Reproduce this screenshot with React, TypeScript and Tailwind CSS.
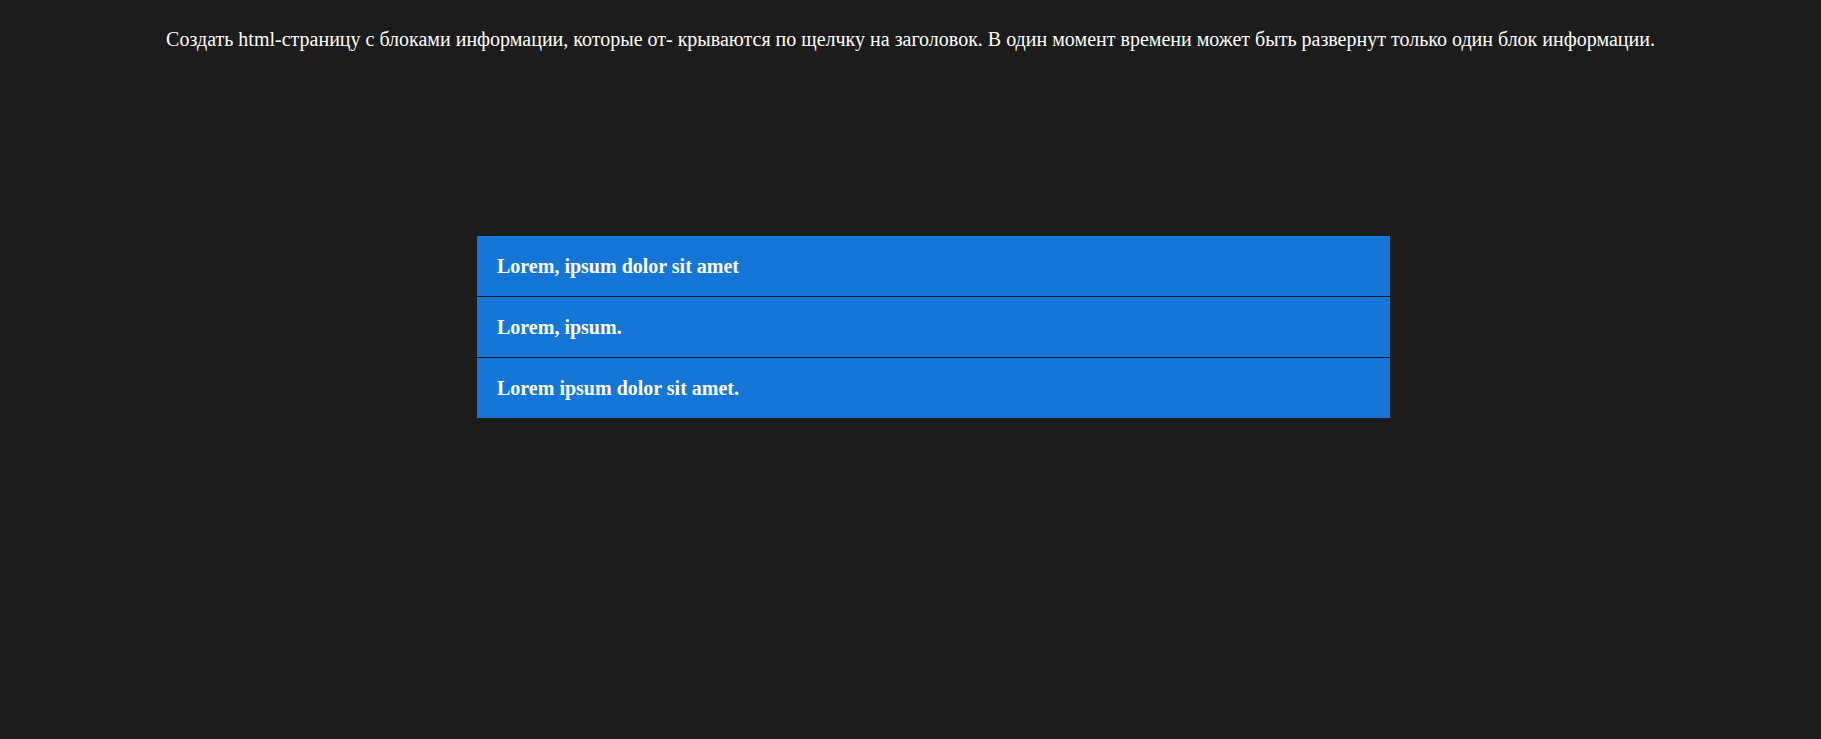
const items = [
  "Lorem, ipsum dolor sit amet",
  "Lorem, ipsum.",
  "Lorem ipsum dolor sit amet.",
];

export default function App() {
  return (
    <div
      className="min-h-[739px] bg-[#1c1c1c] text-white"
      style={{ fontFamily: '"Liberation Serif", "Times New Roman", serif' }}
    >
      <p className="h-[51px] pt-[28px] text-center text-[20px] leading-[23px]">
        Создать html-страницу с блоками информации, которые от- крываются по щелчку на заголовок. В один момент времени может быть развернут только один блок информации.
      </p>

      {/* Accordion */}
      <div className="mt-[185px] ml-[477px] flex w-[913px] flex-col gap-px bg-[#161616]">
        {items.map((title) => (
          <button
            key={title}
            className="flex h-[60px] items-center bg-[#1476d6] px-5 text-left text-[20px] font-bold leading-[normal] text-white"
          >
            {title}
          </button>
        ))}
      </div>
    </div>
  );
}
